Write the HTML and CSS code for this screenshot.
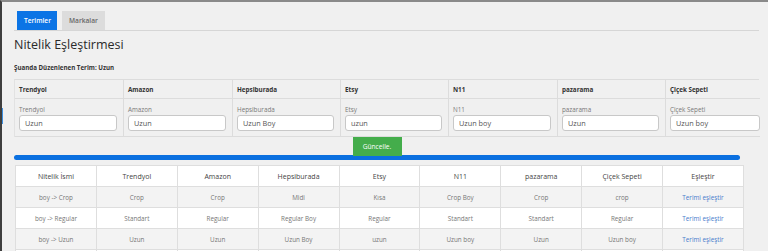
FILE: index.html
```html
<!DOCTYPE html>
<html lang="tr">
<head>
<meta charset="utf-8">
<title>Nitelik Eşleştirmesi</title>
<link rel="stylesheet" href="styles.css">
</head>
<body>
<div class="frame">
  <span class="edge-mark"></span>
  <div class="content">
    <div class="tabs">
      <button class="tab tab-active">Terimler</button>
      <button class="tab">Markalar</button>
    </div>
    <h1 class="title">Nitelik Eşleştirmesi</h1>
    <p class="current">Şuanda Düzenlenen Terim: Uzun</p>

    <div class="edit-table">
      <div class="eh">Trendyol</div>
      <div class="eh">Amazon</div>
      <div class="eh">Hepsiburada</div>
      <div class="eh">Etsy</div>
      <div class="eh">N11</div>
      <div class="eh">pazarama</div>
      <div class="eh">Çiçek Sepeti</div>

      <div class="ec"><label>Trendyol</label><input value="Uzun"></div>
      <div class="ec"><label>Amazon</label><input value="Uzun"></div>
      <div class="ec"><label>Hepsiburada</label><input value="Uzun Boy"></div>
      <div class="ec"><label>Etsy</label><input value="uzun"></div>
      <div class="ec"><label>N11</label><input value="Uzun boy"></div>
      <div class="ec"><label>pazarama</label><input value="Uzun"></div>
      <div class="ec"><label>Çiçek Sepeti</label><input value="Uzun boy"></div>
    </div>

    <div class="actions">
      <button class="btn-update">Güncelle.</button>
    </div>
    <div class="bar"></div>

    <table class="map-table">
      <thead>
        <tr><th>Nitelik İsmi</th><th>Trendyol</th><th>Amazon</th><th>Hepsiburada</th><th>Etsy</th><th>N11</th><th>pazarama</th><th>Çiçek Sepeti</th><th>Eşleştir</th></tr>
      </thead>
      <tbody>
        <tr><td>boy -&gt; Crop</td><td>Crop</td><td>Crop</td><td>Midi</td><td>Kısa</td><td>Crop Boy</td><td>Crop</td><td>crop</td><td><a href="#">Terimi eşleştir</a></td></tr>
        <tr><td>boy -&gt; Regular</td><td>Standart</td><td>Regular</td><td>Regular Boy</td><td>Regular</td><td>Standart</td><td>Standart</td><td>Regular</td><td><a href="#">Terimi eşleştir</a></td></tr>
        <tr><td>boy -&gt; Uzun</td><td>Uzun</td><td>Uzun</td><td>Uzun Boy</td><td>uzun</td><td>Uzun boy</td><td>Uzun</td><td>Uzun boy</td><td><a href="#">Terimi eşleştir</a></td></tr>
        <tr class="spare"><td></td><td></td><td></td><td></td><td></td><td></td><td></td><td></td><td></td></tr>
      </tbody>
    </table>
  </div>
</div>
</body>
</html>
```

FILE: styles.css
```css
* { box-sizing: border-box; }
html, body { margin: 0; padding: 0; }
body {
  background: #f0f0f0;
  font-family: "Open Sans", "Noto Sans", sans-serif;
  color: #222;
}
.frame {
  position: relative;
  height: 251px;
  overflow: hidden;
  border-top: 2px solid #8a8a8a;
  border-left: 2px solid #3e3e3e;
}
.edge-mark {
  position: absolute;
  left: -2px;
  top: 106px;
  width: 3px;
  height: 16px;
  background: #3d8fe0;
}
.content {
  padding-left: 12px;
  width: 757px;
}
.tabs {
  margin-top: 9px;
  padding-left: 3px;
  display: flex;
  gap: 5px;
  border-bottom: 1px solid #d6d6d6;
}
.tab {
  height: 19px;
  border: 0;
  margin: 0;
  padding: 0 7px;
  font-family: inherit;
  font-size: 6.6px;
  font-weight: 600;
  background: #dcdcdc;
  color: #666;
}
.tab-active {
  background: #0b74e5;
  color: #fff;
  width: 40px;
}
.title {
  margin: 6px 0 0;
  font-size: 12.5px;
  line-height: 16px;
  font-weight: 400;
  color: #2a2a2a;
}
.current {
  margin: 11px 0 0;
  font-size: 6.2px;
  line-height: 8px;
  font-weight: 700;
  color: #333;
}
.edit-table {
  margin-top: 7px;
  display: grid;
  grid-template-columns: 109px 109px 108px 108px 109px 108px 94px;
  grid-template-rows: 19px 38px;
  border-top: 1px solid #dcdcdc;
  border-left: 1px solid #e2e2e2;
}
.eh, .ec {
  border-right: 1px solid #dcdcdc;
  border-bottom: 1px solid #dcdcdc;
  padding-left: 4px;
}
.ec:last-child, .eh:nth-child(7) { border-right: 0; }
.eh {
  font-size: 6.3px;
  font-weight: 700;
  color: #333;
  display: flex;
  align-items: center;
}
.ec {
  padding-top: 6px;
  padding-right: 6px;
  display: flex;
  flex-direction: column;
}
.ec:last-child { padding-right: 0; }
.ec label {
  font-size: 6.3px;
  line-height: 9px;
  color: #7a7a7a;
  height: 10px;
}
.ec input {
  width: 100%;
  height: 16px;
  border: 1px solid #c8c8c8;
  border-radius: 3px;
  background: #fff;
  padding: 0 5px;
  font-family: inherit;
  font-size: 7.3px;
  color: #555;
  margin: 0;
}
.actions {
  width: 726px;
  display: flex;
  justify-content: center;
  height: 19px;
  position: relative;
  z-index: 1;
}
.btn-update {
  width: 49px;
  height: 19px;
  border: 0;
  margin: 0;
  background: #44ad4b;
  color: #fff;
  font-family: inherit;
  font-size: 6.6px;
  font-weight: 400;
  padding: 0;
}
.bar {
  width: 726px;
  height: 5px;
  margin-top: -1px;
  background: #0b70e0;
  border-radius: 3px;
}
.map-table {
  margin: 5px 0 0 1px;
  width: 729px;
  border-collapse: collapse;
  table-layout: fixed;
  background: #fff;
}
.map-table th, .map-table td {
  border: 1px solid #dedede;
  text-align: center;
  padding: 0;
  font-weight: 400;
}
.map-table th {
  height: 21px;
  font-size: 7px;
  color: #444;
}
.map-table td {
  height: 21px;
  font-size: 6.3px;
  color: #777;
}
.map-table tbody tr:nth-child(odd) td { background: #f3f3f3; }
.map-table a {
  color: #4a7ccc;
  text-decoration: none;
}
```
